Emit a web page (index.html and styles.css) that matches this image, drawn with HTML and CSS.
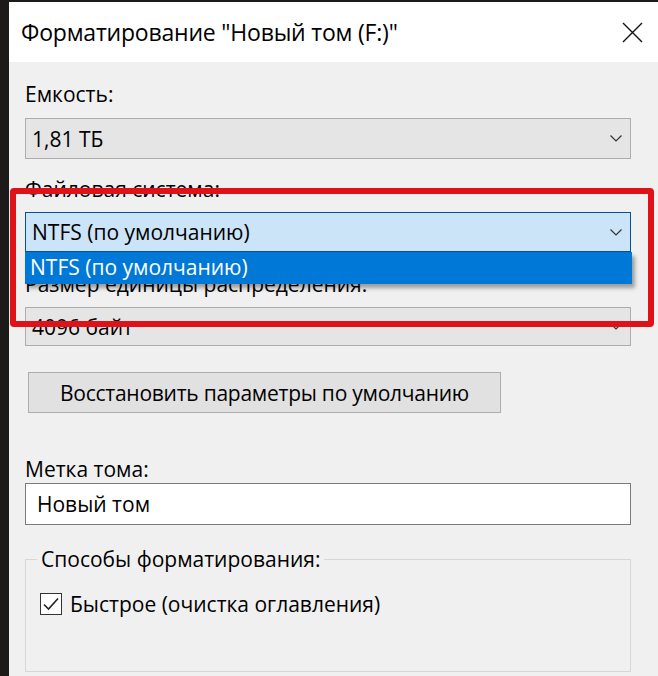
FILE: index.html
```html
<!DOCTYPE html>
<html>
<head>
	<meta charset="utf-8">
	<title>Форматирование</title>
	<link rel="stylesheet" href="styles.css">
</head>
<body>
	<div class="window">
		<header class="titlebar">
			<h1>Форматирование "Новый том (F:)"</h1>
			<svg class="close" width="21" height="21" viewBox="0 0 21 21"><path d="M1 1L20 20M20 1L1 20"/></svg>
		</header>

		<main class="content">
			<div class="field first">
				<label>Емкость:</label>
				<div class="combo">
					<span>1,81 ТБ</span>
					<svg class="chev" width="12" height="7" viewBox="0 0 12 7"><path d="M0.5 0.5L6 6L11.5 0.5"/></svg>
				</div>
			</div>

			<div class="field second">
				<label>Файловая система:</label>
				<div class="combo focused">
					<span>NTFS (по умолчанию)</span>
					<svg class="chev" width="12" height="7" viewBox="0 0 12 7"><path d="M0.5 0.5L6 6L11.5 0.5"/></svg>
					<ul class="droplist">
						<li>NTFS (по умолчанию)</li>
					</ul>
				</div>
			</div>

			<div class="field third">
				<label>Размер единицы распределения:</label>
				<div class="combo">
					<span>4096 байт</span>
					<svg class="chev" width="12" height="7" viewBox="0 0 12 7"><path d="M0.5 0.5L6 6L11.5 0.5"/></svg>
				</div>
			</div>

			<button class="restore">Восстановить параметры по умолчанию</button>

			<div class="field volume">
				<label>Метка тома:</label>
				<div class="textbox">Новый том</div>
			</div>

			<fieldset class="methods">
				<legend>Способы форматирования:</legend>
				<div class="check">
					<span class="box">
						<svg width="20" height="20" viewBox="0 0 20 20"><path d="M3 10.5L7.5 15L17 4.5"/></svg>
					</span>
					<span>Быстрое (очистка оглавления)</span>
				</div>
			</fieldset>
		</main>

		<div class="highlight"></div>
	</div>
</body>
</html>
```

FILE: styles.css
```css
* {
	box-sizing: border-box;
}
html, body {
	margin: 0;
	height: 100%;
}
body {
	background-color: #1d1b19;
	font-family: 'Open Sans', 'Noto Sans', sans-serif;
	color: #000;
	overflow: hidden;
}
.window {
	position: relative;
	margin: 2px 0 0 9px;
	height: 674px;
	background-color: #f0f0f0;
}

/* title bar */
.titlebar {
	height: 60px;
	background-color: #fff;
	display: flex;
	align-items: center;
	justify-content: space-between;
	padding: 0 15px 0 12px;
}
.titlebar h1 {
	margin: 0;
	font-size: 23px;
	font-weight: 400;
	line-height: 24px;
	letter-spacing: -0.2px;
}
.close path {
	stroke: #111;
	stroke-width: 1.4;
	fill: none;
}

/* form */
.content {
	padding: 20px 27px 0 16px;
	font-size: 21px;
}
label {
	display: block;
	line-height: 24px;
}
.first label { margin-bottom: 12px; }
.second { margin-top: 18px; }
.second label { margin-bottom: 11px; }
.third { margin-top: 20px; }
.third label { margin-bottom: 11px; }

.combo {
	position: relative;
	height: 41px;
	border: 1px solid #adadad;
	background-color: #e5e5e5;
	display: flex;
	align-items: center;
	justify-content: space-between;
	padding: 0 8px 0 6px;
}
.second .combo { height: 40px; }
.third .combo { height: 39px; }
.chev path {
	stroke: #333;
	stroke-width: 1.2;
	fill: none;
}
.combo.focused {
	background-color: #cce4f7;
	border-color: #005499;
}
.droplist {
	position: absolute;
	top: 39px;
	left: -1px;
	right: -2px;
	height: 32px;
	margin: 0;
	padding: 0 5px;
	list-style: none;
	background-color: #0078d7;
	color: #fff;
	line-height: 30px;
	box-shadow: 3px 4px 4px rgba(0, 0, 0, 0.35);
	z-index: 2;
}

.restore {
	display: block;
	margin: 26px 0 0 3px;
	width: 473px;
	height: 41px;
	border: 1px solid #adadad;
	background-color: #e1e1e1;
	font-family: inherit;
	font-size: 21px;
	letter-spacing: -0.25px;
	color: #000;
	padding: 0;
}

.volume { margin-top: 44px; }
.volume label { margin-bottom: 2px; }
.textbox {
	height: 42px;
	border: 1px solid #7a7a7a;
	background-color: #fff;
	line-height: 40px;
	padding-left: 11px;
}

.methods {
	margin: 22px 0 0 0;
	height: 125px;
	border: 1px solid #d7d7d7;
	padding: 0 0 0 11px;
}
.methods legend {
	padding: 0 4px;
	line-height: 24px;
}
.check {
	display: flex;
	align-items: center;
	gap: 8px;
	margin-top: 21px;
	line-height: 24px;
}
.check .box {
	width: 22px;
	height: 22px;
	margin-left: 3px;
	border: 1px solid #333;
	background-color: #fff;
	display: flex;
}
.check .box svg {
	width: 20px;
	height: 20px;
}
.check .box path {
	stroke: #222;
	stroke-width: 1.6;
	fill: none;
}

/* red annotation frame */
.highlight {
	position: absolute;
	left: 1px;
	top: 186px;
	width: 644px;
	height: 139px;
	border: 6px solid #df1119;
	border-radius: 4px;
	z-index: 3;
}
```
